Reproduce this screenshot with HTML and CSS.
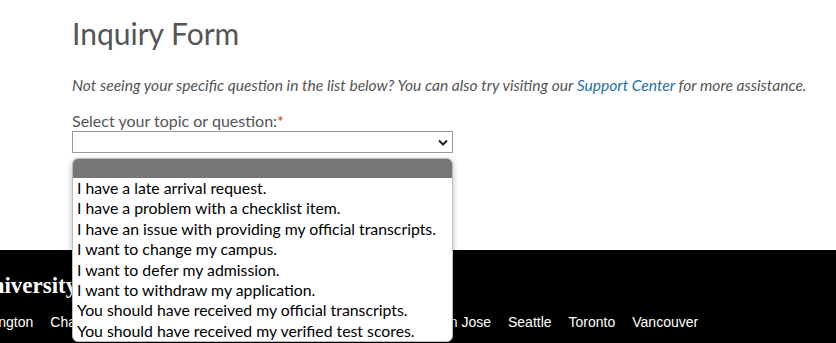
FILE: index.html
```html
<!DOCTYPE html>
<html lang="en">

<head>
    <meta charset="UTF-8">
    <meta name="viewport" content="width=device-width, initial-scale=1.0">
    <title>Inquiry Form</title>
    <link rel="stylesheet" href="styles.css">
</head>

<body>
    <div class="main">
        <h1>Inquiry Form</h1>
        <p class="intro">Not seeing your specific question in the list below? You can also try visiting our <a href="#">Support Center</a> for more assistance.</p>

        <div class="field">
            <label class="label">Select your topic or question:<span class="req">*</span></label>
            <div class="select">
                <svg class="chevron" width="10" height="7" viewBox="0 0 10 7">
                    <polyline points="1,1.5 5,5.5 9,1.5" fill="none" stroke="#222" stroke-width="2" />
                </svg>
            </div>

            <ul class="dropdown">
                <li class="selected">&nbsp;</li>
                <li>I have a late arrival request.</li>
                <li>I have a problem with a checklist item.</li>
                <li>I have an issue with providing my official transcripts.</li>
                <li>I want to change my campus.</li>
                <li>I want to defer my admission.</li>
                <li>I want to withdraw my application.</li>
                <li>You should have received my official transcripts.</li>
                <li>You should have received my verified test scores.</li>
            </ul>
        </div>
    </div>

    <div class="footer">
        <div class="brand">Northeastern University</div>
        <ul class="cities">
            <li>Arlington</li>
            <li>Charlotte</li>
            <li>London</li>
            <li>Oakland</li>
            <li>Portland</li>
            <li>San Francisco</li>
            <li>San Jose</li>
            <li>Seattle</li>
            <li>Toronto</li>
            <li>Vancouver</li>
        </ul>
    </div>
</body>

</html>
```

FILE: styles.css
```css
* {
    padding: 0;
    margin: 0;
    box-sizing: border-box;
}

body {
    font-family: Lato, "Open Sans", sans-serif;
    color: #555;
    overflow: hidden;
}

/* Form area */
.main {
    padding: 14px 0 0 72px;
    height: 250px;
}

.main h1 {
    font-size: 30px;
    line-height: 38px;
    font-weight: 400;
    color: #555;
}

.intro {
    margin-top: 22px;
    font-size: 15.6px;
    line-height: 22px;
    font-style: italic;
}

.intro a {
    color: #1f6fa8;
    text-decoration: none;
}

.field {
    position: relative;
    margin-top: 15px;
    width: 381px;
}

.label {
    display: block;
    font-size: 16px;
    line-height: 20px;
}

.req {
    color: #e0312b;
}

.select {
    height: 22px;
    border: 1px solid #999;
    background: #fff;
    display: flex;
    align-items: center;
    justify-content: flex-end;
    padding-right: 4px;
}

/* Open option list */
.dropdown {
    position: absolute;
    left: 0;
    top: 47px;
    width: 381px;
    list-style: none;
    background: #fff;
    border: 1px solid #bbb;
    border-radius: 6px;
    overflow: hidden;
    box-shadow: 0 2px 6px rgba(0, 0, 0, 0.25);
    z-index: 2;
}

.dropdown li {
    font-size: 15.8px;
    line-height: 20.4px;
    padding-left: 4px;
    color: #000;
    white-space: nowrap;
}

.dropdown li.selected {
    background: #767676;
    height: 19px;
}

/* Footer */
.footer {
    background: #000;
    height: 120px;
    color: #fff;
    overflow: hidden;
    padding-top: 23px;
}

.brand {
    margin-left: -161px;
    font-family: "Liberation Serif", serif;
    font-weight: 700;
    font-size: 23px;
    line-height: 26px;
    white-space: nowrap;
}

.cities {
    list-style: none;
    display: flex;
    gap: 17px;
    margin-top: 13px;
    margin-left: -22px;
    font-family: "Liberation Sans", Arial, sans-serif;
    font-size: 14px;
    line-height: 20px;
    white-space: nowrap;
}
```
